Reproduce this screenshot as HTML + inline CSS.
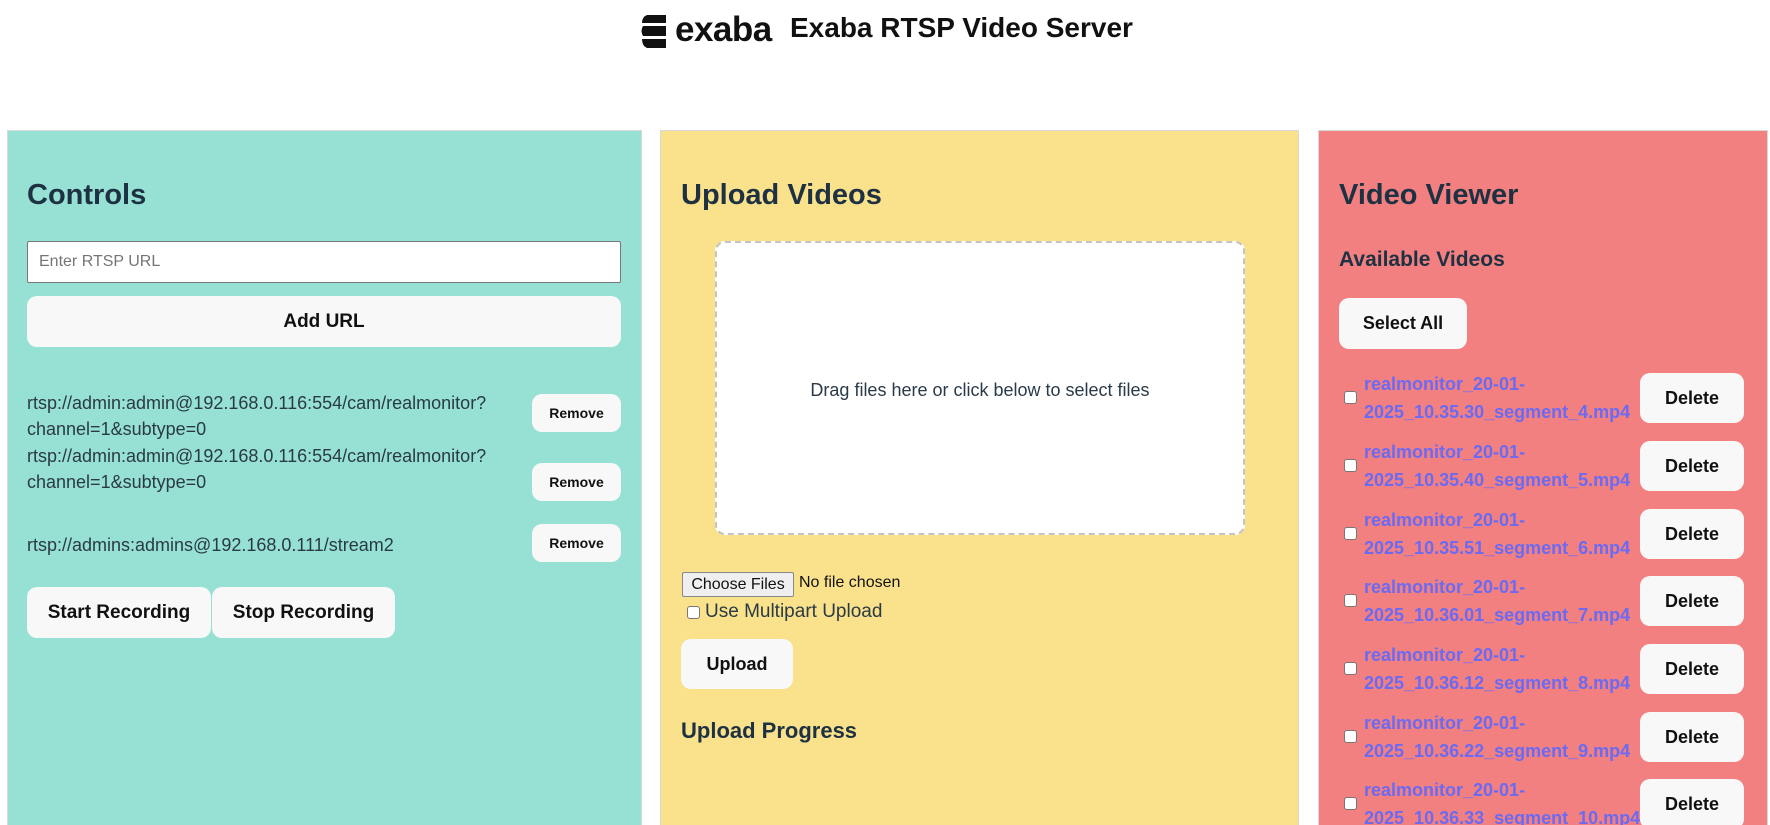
<!DOCTYPE html>
<html><head><meta charset="utf-8"><style>
*{box-sizing:border-box;margin:0;padding:0}
html,body{width:1770px;height:825px;overflow:hidden}
body{background:#fff;font-family:"Liberation Sans",sans-serif;position:relative;color:#1e3040}
.a{position:absolute}
.panel{position:absolute;top:130px;height:760px;border:1px solid #d8d8d8}
h2{position:absolute;font-size:29px;font-weight:bold;color:#1d3142;white-space:nowrap}
.btn{position:absolute;background:#f8f8f8;border-radius:10px;font-weight:bold;color:#111;display:flex;align-items:center;justify-content:center;white-space:nowrap}
.url{position:absolute;left:27px;font-size:18px;line-height:26px;color:#2a3a45}
.cb{position:absolute;width:13px;height:13px;border:1px solid #777;border-radius:3px;background:#fff}
.lk{position:absolute;left:1364px;font-size:18px;font-weight:bold;color:#6a6af2;line-height:28px;white-space:nowrap}
</style></head><body>
<svg class="a" style="left:640px;top:14px" width="28" height="35" viewBox="0 0 28 35">
<path d="M7 1 H26 V9 H2 Q2 3 7 1Z" fill="#111"/>
<path d="M3 12 H26 V22 H3 Q0 17 3 12Z" fill="#111"/>
<path d="M2 25 H26 V34 H7 Q2 32 2 25Z" fill="#111"/>
</svg>
<div class="a" style="left:675px;top:10px;font-size:35px;font-weight:bold;letter-spacing:-0.5px;color:#111">exaba</div>
<div class="a" style="left:790px;top:12px;font-size:28px;font-weight:bold;color:#111">Exaba RTSP Video Server</div>

<div class="panel" style="left:7px;width:635px;background:#96e1d4"></div>
<div class="panel" style="left:660px;width:639px;background:#fae28c"></div>
<div class="panel" style="left:1318px;width:450px;background:#f38080"></div>

<h2 style="left:27px;top:179px">Controls</h2>
<div class="a" style="left:27px;top:241px;width:594px;height:42px;background:#fff;border:1px solid #777;border-radius:2px;font-size:16px;color:#757575;padding:11px 0 0 11px">Enter RTSP URL</div>
<div class="btn" style="left:27px;top:296px;width:594px;height:51px;font-size:19px">Add URL</div>
<div class="url" style="top:390px">rtsp://admin:admin@192.168.0.116:554/cam/realmonitor?<br>channel=1&amp;subtype=0</div>
<div class="btn" style="left:532px;top:394px;width:89px;height:38px;font-size:14px">Remove</div>
<div class="url" style="top:443px">rtsp://admin:admin@192.168.0.116:554/cam/realmonitor?<br>channel=1&amp;subtype=0</div>
<div class="btn" style="left:532px;top:463px;width:89px;height:38px;font-size:14px">Remove</div>
<div class="url" style="top:532px">rtsp://admins:admins@192.168.0.111/stream2</div>
<div class="btn" style="left:532px;top:524px;width:89px;height:38px;font-size:14px">Remove</div>
<div class="btn" style="left:27px;top:587px;width:184px;height:51px;font-size:19px">Start Recording</div>
<div class="btn" style="left:212px;top:587px;width:183px;height:51px;font-size:19px">Stop Recording</div>

<h2 style="left:681px;top:179px">Upload Videos</h2>
<div class="a" style="left:715px;top:241px;width:530px;height:294px;background:#fff;border:2px dashed #c4c4c4;border-radius:10px;display:flex;align-items:center;justify-content:center;font-size:18px;color:#2a3a48;padding-top:4px">Drag files here or click below to select files</div>
<div class="a" style="left:682px;top:572px;width:112px;height:25px;background:#efefef;border:1px solid #888;border-radius:2px;font-size:16px;color:#111;text-align:center;line-height:23px">Choose Files</div>
<div class="a" style="left:799px;top:574px;font-size:16px;color:#111">No file chosen</div>
<div class="cb" style="left:687px;top:606px"></div>
<div class="a" style="left:705px;top:601px;font-size:19px;color:#2a3a45">Use Multipart Upload</div>
<div class="btn" style="left:681px;top:639px;width:112px;height:50px;font-size:18px">Upload</div>
<div class="a" style="left:681px;top:718px;font-size:22px;font-weight:bold;color:#1d3142">Upload Progress</div>

<h2 style="left:1339px;top:179px">Video Viewer</h2>
<div class="a" style="left:1339px;top:248px;font-size:21px;font-weight:bold;color:#1d3142">Available Videos</div>
<div class="btn" style="left:1339px;top:298px;width:128px;height:51px;font-size:18px">Select All</div>

<div class="cb" style="left:1344px;top:391px"></div><div class="lk" style="top:370px">realmonitor_20-01-<br>2025_10.35.30_segment_4.mp4</div><div class="btn" style="left:1640px;top:373px;width:104px;height:50px;font-size:18px">Delete</div>
<div class="cb" style="left:1344px;top:459px"></div><div class="lk" style="top:438px">realmonitor_20-01-<br>2025_10.35.40_segment_5.mp4</div><div class="btn" style="left:1640px;top:441px;width:104px;height:50px;font-size:18px">Delete</div>
<div class="cb" style="left:1344px;top:527px"></div><div class="lk" style="top:506px">realmonitor_20-01-<br>2025_10.35.51_segment_6.mp4</div><div class="btn" style="left:1640px;top:509px;width:104px;height:50px;font-size:18px">Delete</div>
<div class="cb" style="left:1344px;top:594px"></div><div class="lk" style="top:573px">realmonitor_20-01-<br>2025_10.36.01_segment_7.mp4</div><div class="btn" style="left:1640px;top:576px;width:104px;height:50px;font-size:18px">Delete</div>
<div class="cb" style="left:1344px;top:662px"></div><div class="lk" style="top:641px">realmonitor_20-01-<br>2025_10.36.12_segment_8.mp4</div><div class="btn" style="left:1640px;top:644px;width:104px;height:50px;font-size:18px">Delete</div>
<div class="cb" style="left:1344px;top:730px"></div><div class="lk" style="top:709px">realmonitor_20-01-<br>2025_10.36.22_segment_9.mp4</div><div class="btn" style="left:1640px;top:712px;width:104px;height:50px;font-size:18px">Delete</div>
<div class="cb" style="left:1344px;top:797px"></div><div class="lk" style="top:776px">realmonitor_20-01-<br>2025_10.36.33_segment_10.mp4</div><div class="btn" style="left:1640px;top:779px;width:104px;height:50px;font-size:18px">Delete</div>
</body></html>
